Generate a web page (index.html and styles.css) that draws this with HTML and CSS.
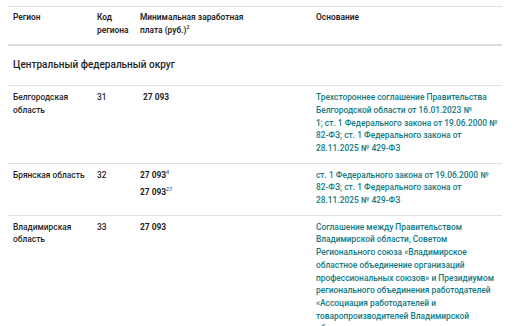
FILE: index.html
```html
<!DOCTYPE html>
<html lang="ru">
<head>
<meta charset="utf-8">
<link rel="stylesheet" href="styles.css">
</head>
<body>
<table class="mrot">
  <colgroup>
    <col class="c-region"><col class="c-code"><col class="c-wage"><col class="c-basis">
  </colgroup>
  <thead>
    <tr>
      <th>Регион</th>
      <th>Код региона</th>
      <th><span class="hwage">Минимальная заработная плата (руб.)<sup class="hsup">2</sup></span></th>
      <th>Основание</th>
    </tr>
  </thead>
  <tbody>
    <tr class="district">
      <td colspan="4">Центральный федеральный округ</td>
    </tr>
    <tr>
      <td>Белгородская область</td>
      <td>31</td>
      <td><b class="wage shift">27 093</b></td>
      <td><a class="link">Трехстороннее соглашение Правительства Белгородской области от 16.01.2023 №<br>1; ст. 1 Федерального закона от 19.06.2000 № 82-ФЗ; ст. 1 Федерального закона от 28.11.2025 № 429-ФЗ</a></td>
    </tr>
    <tr>
      <td>Брянская область</td>
      <td>32</td>
      <td>
        <div class="wline"><b class="wage">27 093</b><sup class="note">4</sup></div>
        <div class="wline"><b class="wage">27 093</b><sup class="note">27</sup></div>
      </td>
      <td><a class="link">ст. 1 Федерального закона от 19.06.2000 № 82-ФЗ; ст. 1 Федерального закона от 28.11.2025 № 429-ФЗ</a></td>
    </tr>
    <tr>
      <td>Владимирская область</td>
      <td>33</td>
      <td><b class="wage">27 093</b></td>
      <td><a class="link">Соглашение между Правительством Владимирской области, Советом Регионального союза «Владимирское областное объединение организаций профессиональных союзов» и Президиумом регионального объединения работодателей «Ассоциация работодателей и товаропроизводителей Владимирской области» по регулированию социально-трудовых отношений</a></td>
    </tr>
  </tbody>
</table>
</body>
</html>
```

FILE: styles.css
```css
html, body {
  margin: 0;
  background: #ffffff;
}
body {
  padding: 6px 0 0 8px;
  font-family: Roboto, "Liberation Sans", sans-serif;
  color: #1f1f1f;
}
.mrot {
  width: 494px;
  border-collapse: collapse;
  font-size: 8.4px;
  line-height: 12.7px;
  font-weight: 500;
  border-top: 1px solid #e2e2e2;
}
.c-region { width: 84px; }
.c-code { width: 43px; }
.c-wage { width: 176px; }
.c-basis { width: 191px; }
.mrot th {
  text-align: left;
  vertical-align: top;
  font-weight: 600;
  padding: 4px 5px 8px 5px;
  border-bottom: 2px solid #dcdcd7;
}
.hwage {
  display: block;
  width: 112px;
}
.mrot td {
  vertical-align: top;
  padding: 5px 4px 8px 5px;
  border-bottom: 1px solid #e2e2e2;
}
.mrot tr.district td {
  font-size: 10px;
  font-weight: 500;
  padding: 13px 5px 13px 5px;
}
.hsup {
  font-size: 5.5px;
  line-height: 0;
  vertical-align: 4px;
}
.wage {
  font-weight: 700;
}
.shift {
  margin-left: 3px;
}
.wline {
  margin-bottom: 5px;
}
.note {
  font-size: 5.5px;
  line-height: 0;
  vertical-align: 4px;
  color: #2e64c8;
  font-weight: 500;
}
.link {
  color: #117a84;
  text-decoration: none;
  display: block;
}
```
